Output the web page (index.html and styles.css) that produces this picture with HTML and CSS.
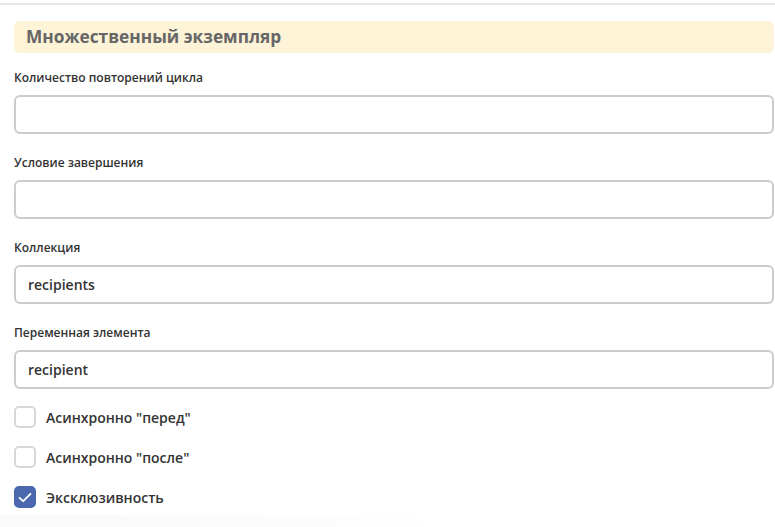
FILE: index.html
```html
<!DOCTYPE html>
<html lang="ru">
<head>
<meta charset="utf-8">
<title>Множественный экземпляр</title>
<link rel="stylesheet" href="styles.css">
</head>
<body>
<div class="topline"></div>
<div class="panel">
  <div class="header">Множественный экземпляр</div>
  <div class="field">
    <label class="label">Количество повторений цикла</label>
    <div class="input"></div>
  </div>
  <div class="field">
    <label class="label">Условие завершения</label>
    <div class="input"></div>
  </div>
  <div class="field">
    <label class="label">Коллекция</label>
    <div class="input">recipients</div>
  </div>
  <div class="field">
    <label class="label">Переменная элемента</label>
    <div class="input">recipient</div>
  </div>
  <div class="checks">
    <div class="check"><span class="box"></span><span class="ctext">Асинхронно "перед"</span></div>
    <div class="check"><span class="box"></span><span class="ctext">Асинхронно "после"</span></div>
    <div class="check"><span class="box checked"><svg width="14" height="11" viewBox="0 0 14 11"><path d="M1.5 5.8 L5.2 9.2 L12.5 1.8" fill="none" stroke="#fff" stroke-width="1.8" stroke-linecap="round" stroke-linejoin="round"/></svg></span><span class="ctext">Эксклюзивность</span></div>
  </div>
</div>
<div class="fade"></div>
</body>
</html>
```

FILE: styles.css
```css
html, body {
  margin: 0;
  padding: 0;
  background: #fff;
  font-family: "Open Sans", "Noto Sans", sans-serif;
  color: #333;
  overflow: hidden;
  height: 527px;
}
.topline {
  margin-top: 3px;
  height: 2px;
  background: #e4e7eb;
}
.panel {
  padding: 0 1px 0 14px;
}
.header {
  margin-top: 16px;
  height: 32px;
  line-height: 32px;
  background: #fdf3d6;
  border-radius: 6px;
  padding-left: 12px;
  font-size: 17.3px;
  font-weight: 700;
  color: #666;
}
.field {
  display: flex;
  flex-direction: column;
  margin-top: 16px;
}
.field + .field {
  margin-top: 20px;
}
.label {
  display: block;
  font-size: 12px;
  font-weight: 600;
  line-height: 17px;
  color: #333;
  margin-bottom: 9px;
}
.input {
  box-sizing: border-box;
  height: 39px;
  border: 2px solid #cccccc;
  border-radius: 6px;
  padding: 0 12px;
  font-size: 14px;
  font-weight: 600;
  line-height: 35px;
  color: #333;
}
.checks {
  display: flex;
  flex-direction: column;
  gap: 18px;
  margin-top: 17px;
}
.check {
  display: flex;
  align-items: center;
  gap: 10px;
  height: 22px;
}
.box {
  box-sizing: border-box;
  width: 22px;
  height: 22px;
  border: 2px solid #d8d8d8;
  border-radius: 5px;
  display: flex;
  align-items: center;
  justify-content: center;
  flex: none;
}
.box.checked {
  background: #4b68ae;
  border-color: #4b68ae;
}
.ctext {
  font-size: 14px;
  font-weight: 600;
  color: #333;
}
.fade {
  margin-top: 7px;
  height: 14px;
  width: 440px;
  background: linear-gradient(to right, rgba(244,244,244,0.5), rgba(244,244,244,0.3) 60%, rgba(255,255,255,0));
}
```
